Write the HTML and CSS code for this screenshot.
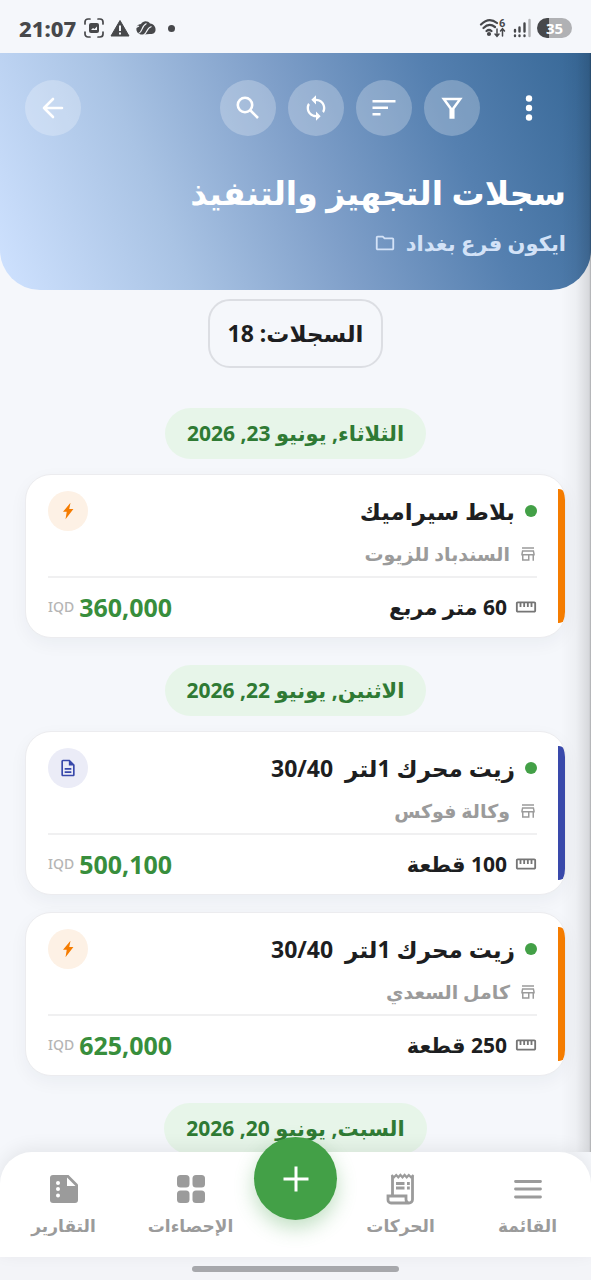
FILE: index.html
```html
<!DOCTYPE html>
<html lang="ar" dir="rtl">
<head>
<meta charset="utf-8">
<meta name="viewport" content="width=device-width, initial-scale=1">
<title>سجلات التجهيز والتنفيذ</title>
<link rel="stylesheet" href="styles.css">
</head>
<body>
<svg class="sprite" aria-hidden="true">
  <symbol id="i-bolt" viewBox="0 0 24 24"><path d="M15 2 6 13h4.500L9 22l9.500-12.500h-5z"/></symbol>
  <symbol id="i-doc" viewBox="0 0 24 24"><path d="M8 16h8v2H8zm0-4h8v2H8zm6-10H6c-1.100 0-2 .9-2 2v16c0 1.100.89 2 1.990 2H18c1.100 0 2-.9 2-2V8zm4 18H6V4h7v5h5z"/></symbol>
  <symbol id="i-store" viewBox="0 0 24 24"><path d="M20 3H4v2h16zm1 11v-2l-1-5H4l-1 5v2h1v7h10v-7h4v7h2v-7zm-9 5H6v-5h6zm-7-7 .6-3h12.800l.6 3z"/></symbol>
  <symbol id="i-ruler" viewBox="0 0 24 24"><path d="M21 6H3c-1.100 0-2 .9-2 2v8c0 1.100.9 2 2 2h18c1.100 0 2-.9 2-2V8c0-1.100-.9-2-2-2zm0 10H3V8h2v4h2V8h2v4h2V8h2v4h2V8h2v4h2V8h2z"/></symbol>
</svg>

<div class="status" dir="ltr">
  <time class="clock">21:07</time>
  <svg class="s-icon" viewBox="0 0 20 20" fill="none" stroke="#47484b" stroke-width="1.700" stroke-linecap="round"><path d="M1 6V4a3 3 0 0 1 3-3h2M14 1h2a3 3 0 0 1 3 3v2M19 14v2a3 3 0 0 1-3 3h-2M6 19H4a3 3 0 0 1-3-3v-2"/><rect x="5" y="5" width="10" height="10" rx="2" fill="#47484b" stroke="none"/><path d="m7 12 2-2 1.500 1L13 8.500V12z" fill="#f5f7fb" stroke="none"/></svg>
  <svg class="s-icon" viewBox="0 0 20 20"><path d="M10 2.500 19 18H1z" fill="#47484b" stroke="#47484b" stroke-width="1" stroke-linejoin="round"/><path d="M10 7.500v5.500M10 14.500v2" stroke="#f5f7fb" stroke-width="2"/></svg>
  <svg class="s-icon" viewBox="0 0 20 20"><path d="M.5 12.500C0 8 2 6.500 5 6 7 2.500 12 2.500 14 5.500c4 .5 6 3.500 5.500 7-.5 3-3 3.500-6 3.500L8 16.500c-3 .5-6.500-.5-7.500-4z" fill="#47484b"/><path d="M2.500 15.500C7 14 5 8 10.500 5.500M7.500 17c4-1.500 2.500-7 8-8.500M0 9.500 3 8" fill="none" stroke="#f5f7fb" stroke-width="1.200"/></svg>
  <span class="s-dot"></span>
  <span class="s-gap"></span>
  <svg class="s-wifi" viewBox="0 0 28 20" fill="none" stroke="#47484b" stroke-width="2.200" stroke-linecap="round"><path d="M2 6.500Q10-1.500 18 5M4.500 10Q10 4.500 16 9M7.500 13q2.500-2 5 0"/><circle cx="10" cy="16" r="1" fill="#47484b"/><path d="M18 11v7m-2-2 2 2.300 2-2.300M23.500 18v-7m-2 2 2-2.300 2 2.300" stroke-width="1.500"/><text x="20" y="8.500" class="s-six">6</text></svg>
  <svg class="s-signal" viewBox="0 0 18 20" fill="none" stroke-width="2.400" stroke-linecap="round" stroke="#47484b"><path d="M2 12v1.500M6.500 9.500v4M11.500 5.500v8" /><path d="M2 17.500v.5M6.500 17.500v.5M11.500 17.500v.5"/><path d="M16.500 2v16" stroke="#b3b4b7"/></svg>
  <span class="battery">35</span>
</div>

<div class="app">
  <header class="hero">
    <div class="toolbar">
      <button class="more" type="button" aria-label="المزيد"><svg viewBox="0 0 32 32" fill="#fff"><circle cx="16" cy="6.500" r="3.200"/><circle cx="16" cy="16" r="3.200"/><circle cx="16" cy="25.500" r="3.200"/></svg></button>
      <button class="round" type="button" aria-label="تصفية"><svg viewBox="0 0 28 28" fill="none" stroke="#fff" stroke-width="2.500"><path d="M5.800 5h16.400L15.300 14.500v9h-2.600v-9z"/><path d="M14 14v9" stroke-width="4"/></svg></button>
      <button class="round" type="button" aria-label="ترتيب"><svg viewBox="0 0 28 28" stroke="#fff" stroke-width="2.500"><path d="M2.500 7.300h23M2.500 13.700h15.500M2.500 20.300h8"/></svg></button>
      <button class="round" type="button" aria-label="تحديث"><svg viewBox="0 0 24 24" fill="#fff"><path d="M12 4V1L8 5l4 4V6c3.310 0 6 2.690 6 6 0 1.010-.25 1.970-.7 2.800l1.460 1.460C19.540 15.030 20 13.570 20 12c0-4.420-3.580-8-8-8zm0 14c-3.310 0-6-2.690-6-6 0-1.010.25-1.970.7-2.800L5.240 7.740C4.460 8.970 4 10.430 4 12c0 4.420 3.580 8 8 8v3l4-4-4-4z"/></svg></button>
      <button class="round" type="button" aria-label="بحث"><svg viewBox="0 0 28 28" fill="none" stroke="#fff" stroke-width="2.600"><circle cx="11" cy="11" r="7.200"/><path d="m16 16 8 8"/></svg></button>
      <span class="s-gap"></span>
      <button class="round" type="button" aria-label="رجوع"><svg viewBox="0 0 28 28" fill="none" stroke="#fff" stroke-width="2.600" stroke-linecap="round" stroke-linejoin="round"><path d="M23 14H5M14 5l-9 9 9 9"/></svg></button>
    </div>
    <h1>سجلات التجهيز والتنفيذ</h1>
    <p class="branch"><span>ايكون فرع بغداد</span><svg viewBox="0 0 24 24" fill="currentColor"><path d="M9.170 6l2 2H20v10H4V6zM10 4H4c-1.100 0-1.990.9-1.990 2L2 18c0 1.100.9 2 2 2h16c1.100 0 2-.9 2-2V8c0-1.100-.9-2-2-2h-8z"/></svg></p>
  </header>

  <main class="list">
    <p class="count">السجلات: 18</p>

    <h2 class="date">الثلاثاء, يونيو 23, 2026</h2>
    <article class="card orange">
      <div class="row head"><i class="dot"></i><h3>بلاط سيراميك</h3><span class="badge"><svg><use href="#i-bolt"/></svg></span></div>
      <div class="row vendor"><svg><use href="#i-store"/></svg><span>السندباد للزيوت</span></div>
      <div class="row foot"><svg><use href="#i-ruler"/></svg><span class="qty">60 متر مربع</span><span class="amount" dir="ltr"><small>IQD</small><b>360,000</b></span></div>
    </article>

    <h2 class="date">الاثنين, يونيو 22, 2026</h2>
    <article class="card indigo">
      <div class="row head"><i class="dot"></i><h3>زيت محرك 1لتر  30/40</h3><span class="badge"><svg><use href="#i-doc"/></svg></span></div>
      <div class="row vendor"><svg><use href="#i-store"/></svg><span>وكالة فوكس</span></div>
      <div class="row foot"><svg><use href="#i-ruler"/></svg><span class="qty">100 قطعة</span><span class="amount" dir="ltr"><small>IQD</small><b>500,100</b></span></div>
    </article>
    <article class="card orange">
      <div class="row head"><i class="dot"></i><h3>زيت محرك 1لتر  30/40</h3><span class="badge"><svg><use href="#i-bolt"/></svg></span></div>
      <div class="row vendor"><svg><use href="#i-store"/></svg><span>كامل السعدي</span></div>
      <div class="row foot"><svg><use href="#i-ruler"/></svg><span class="qty">250 قطعة</span><span class="amount" dir="ltr"><small>IQD</small><b>625,000</b></span></div>
    </article>

    <h2 class="date">السبت, يونيو 20, 2026</h2>
  </main>
</div>

<nav class="tabs">
  <a class="tab" href="#menu"><svg viewBox="0 0 32 32" stroke="currentColor" stroke-width="2.800" stroke-linecap="round"><path d="M3.500 8.500h25M3.500 16h25M3.500 24h25"/></svg><span>القائمة</span></a>
  <a class="tab" href="#moves"><svg viewBox="0 0 32 32" fill="none" stroke="currentColor" stroke-width="2.800"><path d="M7.500 23V3M27.500 3v23.500a3.500 3.500 0 0 1-3.500 3.500H6a3 3 0 0 1-3-3v-4h18v3.500a3.500 3.500 0 0 0 3.500 3.500"/><path d="M6.500 2l2.500 2.300L11.200 2l2.100 2.300L15.400 2l2.100 2.300L19.600 2l2.100 2.300L23.800 2 26 4.300 28.500 2" stroke-width="2.200"/><path d="M11 10.500h8.500M11 15h8.500M22 10.500h2.800M22 15h2.800"/></svg><span>الحركات</span></a>
  <button class="fab" type="button" aria-label="إضافة"><svg viewBox="0 0 32 32" stroke="#fff" stroke-width="3"><path d="M16 3.500v25M3.500 16h25"/></svg></button>
  <a class="tab" href="#stats"><svg viewBox="0 0 32 32" fill="currentColor"><rect x="2" y="2" width="12.500" height="12.500" rx="3.500"/><rect x="17.500" y="2" width="12.500" height="12.500" rx="3.500"/><rect x="2" y="17.500" width="12.500" height="12.500" rx="3.500"/><rect x="17.500" y="17.500" width="12.500" height="12.500" rx="3.500"/></svg><span>الإحصاءات</span></a>
  <a class="tab" href="#reports"><svg viewBox="0 0 32 32"><path d="M5 2h15.500L30 11.500V27a3 3 0 0 1-3 3H5a3 3 0 0 1-3-3V5a3 3 0 0 1 3-3z" fill="currentColor"/><path d="M19 4.500V13h8.500z" fill="#fff"/><g fill="#fff"><circle cx="10" cy="10" r="2"/><circle cx="10" cy="16" r="2"/><circle cx="10" cy="22.500" r="2"/></g></svg><span>التقارير</span></a>
</nav>
<div class="gesture"><span></span></div>
</body>
</html>
```
FILE: styles.css
```css
* { box-sizing: border-box; margin: 0; padding: 0; }

body {
  display: flex;
  flex-direction: column;
  height: 100vh;
  overflow: hidden;
  background: #f5f7fb;
  color: #1d1e21;
  font-family: "Noto Sans", "DejaVu Sans", sans-serif;
}

svg { display: block; flex: none; }
button { border: 0; cursor: pointer; font: inherit; }
.sprite { position: absolute; width: 0; height: 0; }

/* Status bar */
.status {
  display: flex;
  align-items: center;
  gap: 6px;
  height: 53px;
  flex: none;
  padding: 3px 19px 0;
  color: #47484b;
}
.clock { font: 800 22px/28px "Noto Sans", sans-serif; margin-right: 2px; }
.s-icon { width: 20px; height: 20px; }
.s-dot { width: 7px; height: 7px; border-radius: 50%; background: #47484b; margin-left: 6px; }
.s-gap { flex: 1; }
.s-wifi { width: 28px; height: 20px; }
.s-six { font: 700 11px Roboto, sans-serif; fill: #47484b; stroke: none; }
.s-signal { width: 18px; height: 20px; }
.battery {
  width: 35px;
  border-radius: 10px;
  background: linear-gradient(90deg, #47484b 12px, #b0b1b4 12px);
  color: #fff;
  font: 700 15px/20px "Noto Sans", sans-serif;
  text-align: center;
}

.app { position: relative; display: flex; flex-direction: column; flex: 1; min-height: 0; }
.app::after {
  content: "";
  position: absolute;
  inset: 0 0 0 auto;
  width: 30px;
  background: linear-gradient(90deg, #00000000, #00000008 50%, #00000020 94%, #00000050);
  pointer-events: none;
}

/* Header */
.hero {
  flex: none;
  padding: 27px 25px;
  border-radius: 0 0 40px 40px;
  background: linear-gradient(68deg, #cfe2ff, #a9c3e4 28%, #7f9fc9 52%, #5580b0 75%, #366796);
  color: #fff;
}
.toolbar { display: flex; gap: 12px; margin-bottom: 27px; }
.round, .more { display: grid; place-items: center; height: 56px; background: none; }
.round { width: 56px; border-radius: 50%; background: #ffffff40; }
.round svg { width: 28px; height: 28px; }
.more { width: 74px; }
.more svg { width: 32px; height: 32px; }
h1 { font-size: 33px; line-height: 60px; }
.branch { display: flex; align-items: center; gap: 10px; font-size: 21px; font-weight: 600; line-height: 40px; color: #d3e2f7; }
.branch svg { width: 22px; height: 22px; }

/* Records */
.list {
  display: flex;
  flex-direction: column;
  align-items: center;
  flex: 1;
  min-height: 0;
  padding: 9px 25px 0;
  overflow: hidden;
}
.list > * { flex: none; }
.count {
  padding: 0 18px;
  margin-bottom: 13px;
  border: 2px solid #dcdee3;
  border-radius: 22px;
  font-size: 23px;
  font-weight: 700;
  line-height: 65px;
}
.date {
  padding: 0 22px;
  margin: 27px 0 15px;
  border-radius: 26px;
  background: #e7f5e9;
  color: #2f7a34;
  font-size: 21px;
  line-height: 51px;
}
.card {
  position: relative;
  width: 100%;
  padding: 16px 28px 2px 22px;
  border: 1px solid #ececef;
  border-radius: 26px;
  background: #fff;
  box-shadow: 0 6px 18px #1a23400c;
  overflow: hidden;
}
.card + .card { margin-top: 17px; }
.card::before {
  content: "";
  position: absolute;
  inset: 14px 0 14px auto;
  width: 7px;
  border-radius: 0 6px 6px 0;
  background: var(--accent);
}
.orange { --accent: #f57c00; --tint: #fdf1e5; }
.indigo { --accent: #3949ab; --tint: #ebecf7; }
.row { display: flex; align-items: center; }
.head { height: 40px; gap: 10px; }
.dot { width: 12px; height: 12px; border-radius: 50%; background: #43a047; }
h3 { flex: 1; font-size: 23px; line-height: 40px; white-space: pre; }
.badge { display: grid; place-items: center; width: 40px; height: 40px; border-radius: 50%; background: var(--tint); color: var(--accent); }
.badge svg { width: 20px; height: 20px; fill: currentColor; }
.vendor { gap: 9px; height: 47px; color: #9b9b9b; font-size: 19px; font-weight: 600; border-bottom: 2px solid #f0f0f1; }
.vendor svg { width: 18px; height: 18px; fill: currentColor; }
.foot { gap: 8px; height: 57px; }
.foot > svg { width: 22px; height: 22px; fill: #757575; }
.qty { flex: 1; font-size: 21px; font-weight: 700; }
.amount { display: flex; align-items: center; gap: 5px; }
.amount small { color: #b5b5b5; font-size: 14px; font-weight: 500; }
.amount b { color: #388e3c; font-size: 25px; }

/* Bottom navigation */
.tabs {
  position: relative;
  display: grid;
  grid-template-columns: 1fr 1fr 83px 1fr 1fr;
  flex: none;
  height: 105px;
  border-radius: 32px 32px 0 0;
  background: #fff;
  box-shadow: 0 -4px 18px #00000012;
}
.tab {
  display: flex;
  flex-direction: column;
  align-items: center;
  gap: 5px;
  padding-top: 21px;
  color: #9b9b9b;
  text-decoration: none;
  font-size: 17px;
  font-weight: 600;
  line-height: 32px;
}
.tab svg { width: 32px; height: 32px; }
.fab {
  display: grid;
  place-items: center;
  width: 83px;
  height: 83px;
  margin-top: -15px;
  border-radius: 50%;
  background: #43a047;
  box-shadow: 0 8px 20px #43a04755;
}
.fab svg { width: 32px; height: 32px; }
.gesture { display: grid; place-items: center; flex: none; height: 23px; background: #f3f4f8; }
.gesture span { width: 35%; height: 6px; border-radius: 3px; background: #a7a8ac; }
```
